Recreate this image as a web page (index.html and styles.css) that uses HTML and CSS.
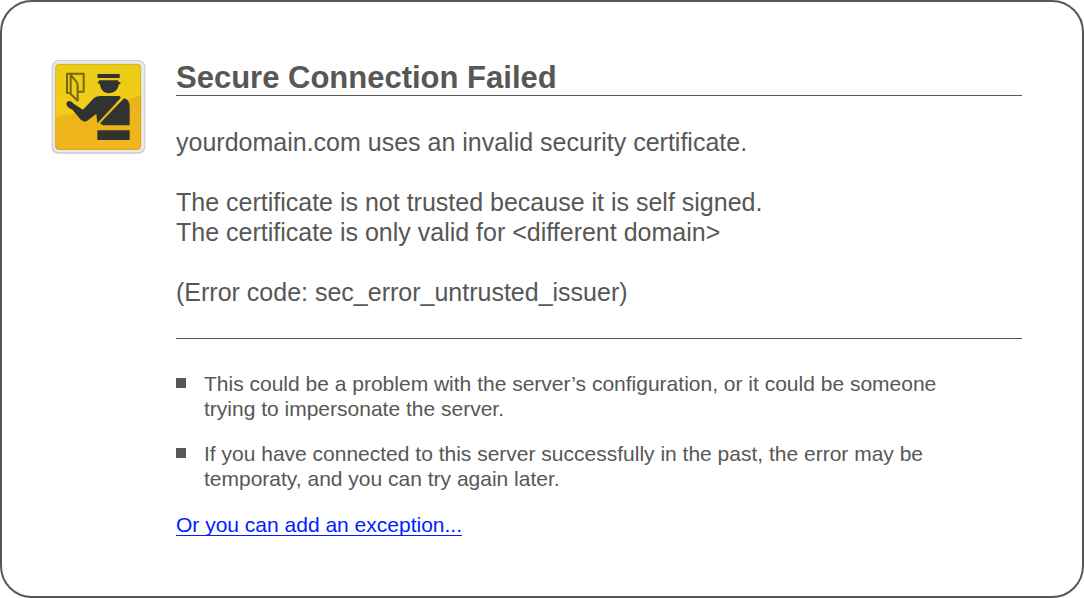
FILE: index.html
```html
<!DOCTYPE html>
<html lang="en">
<head>
<meta charset="utf-8">
<title>Secure Connection Failed</title>
<link rel="stylesheet" href="styles.css">
</head>
<body>
<main class="card">
  <svg class="badge" viewBox="21 22 285 285" role="img" aria-label="Certificate warning">
    <defs>
      <linearGradient id="gold" x1="0" y1="0" x2="0" y2="1">
        <stop offset="0" stop-color="#e8cc14"/>
        <stop offset="0.5" stop-color="#f3cc1a"/>
        <stop offset="1" stop-color="#f3b81f"/>
      </linearGradient>
      <linearGradient id="shade" x1="0" y1="0" x2="0" y2="1">
        <stop offset="0" stop-color="#e6b514"/>
        <stop offset="1" stop-color="#f3b51f"/>
      </linearGradient>
      <clipPath id="plate"><rect x="34" y="37" width="257" height="257" rx="11"/></clipPath>
    </defs>
    <rect x="23" y="25" width="281" height="281" rx="20" fill="#c9c9c9"/>
    <rect x="26" y="27" width="275" height="275" rx="18" fill="#e9e9e9"/>
    <rect x="34" y="37" width="257" height="257" rx="11" fill="url(#gold)"/>
    <g clip-path="url(#plate)">
      <path d="M34 202C60 184 110 190 160 178C210 165 245 140 291 132V294H34Z" fill="url(#shade)"/>
    </g>
    <rect x="35" y="38" width="255" height="255" rx="10" fill="none" stroke="#c7a31c" stroke-width="2"/>
    <g fill="none" stroke="#75670c" stroke-width="6" stroke-linejoin="round">
      <path d="M80 124H69V66H119V120H103"/>
      <path d="M80 70V127L101 147V101Q101 95 97 90Z"/>
    </g>
    <g fill="#30332f">
      <path d="M160 67H227V79H161Z"/>
      <path d="M165 86H223V91H229V98H224C224 113 210 125 194 125C180 125 169 113 168 98L161 94V90H165Z"/>
      <path d="M69 151C75 145 83 149 90 157L117 174L145 144C152 137 158 133 170 133H226L231 138L160 215L157 186L132 206C124 212 116 210 109 203L84 173C75 171 63 160 69 151Z"/>
      <path d="M240 140C253 143 257 153 257 168V221H177L168 215Z"/>
      <path d="M160 236H257V265H160Z"/>
    </g>
  </svg>
  <div class="content">
    <h1 class="title">Secure Connection Failed</h1>
    <div class="details">
      <p>yourdomain.com uses an invalid security certificate.</p>
      <p>The certificate is not trusted because it is self signed.<br>The certificate is only valid for &lt;different domain&gt;</p>
      <p>(Error code: sec_error_untrusted_issuer)</p>
    </div>
    <ul class="reasons">
      <li>This could be a problem with the server’s configuration, or it could be someone trying to impersonate the server.</li>
      <li>If you have connected to this server successfully in the past, the error may be temporaty, and you can try again later.</li>
    </ul>
    <a class="exception" href="#">Or you can add an exception...</a>
  </div>
</main>
</body>
</html>
```
FILE: styles.css
```css
* {
  box-sizing: border-box;
}

body {
  margin: 0;
  background: #fff;
  color: #575756;
  font-family: "Liberation Sans", Arial, sans-serif;
}

.card {
  display: flex;
  align-items: flex-start;
  gap: 30px;
  min-height: 100vh;
  padding: 57px 60px 40px 49px;
  border: 2px solid #575756;
  border-radius: 32px;
}

.badge {
  flex: none;
  width: 95px;
  height: 95px;
}

.content {
  flex: 1;
  min-width: 0;
}

.title {
  margin: 0;
  padding-top: 2px;
  border-bottom: 1px solid #575756;
  font-size: 31px;
  line-height: 34px;
}

.details {
  display: grid;
  gap: 30px;
  padding: 31px 0;
  border-bottom: 1px solid #575756;
  font-size: 25px;
  line-height: 30px;
}

.details p {
  margin: 0;
}

.reasons {
  display: grid;
  gap: 20px;
  max-width: 780px;
  margin: 32px 0 21px;
  padding: 0;
  list-style: none;
  font-size: 21px;
  line-height: 25px;
}

.reasons li {
  display: flex;
  gap: 18px;
}

.reasons li::before {
  content: "";
  flex: none;
  width: 10px;
  height: 10px;
  margin-top: 7px;
  background: #575756;
}

.exception {
  display: block;
  width: fit-content;
  color: #001dff;
  font-size: 21px;
  line-height: 25px;
  text-decoration-thickness: 1px;
  text-underline-offset: 3px;
  text-decoration-skip-ink: none;
}
```
